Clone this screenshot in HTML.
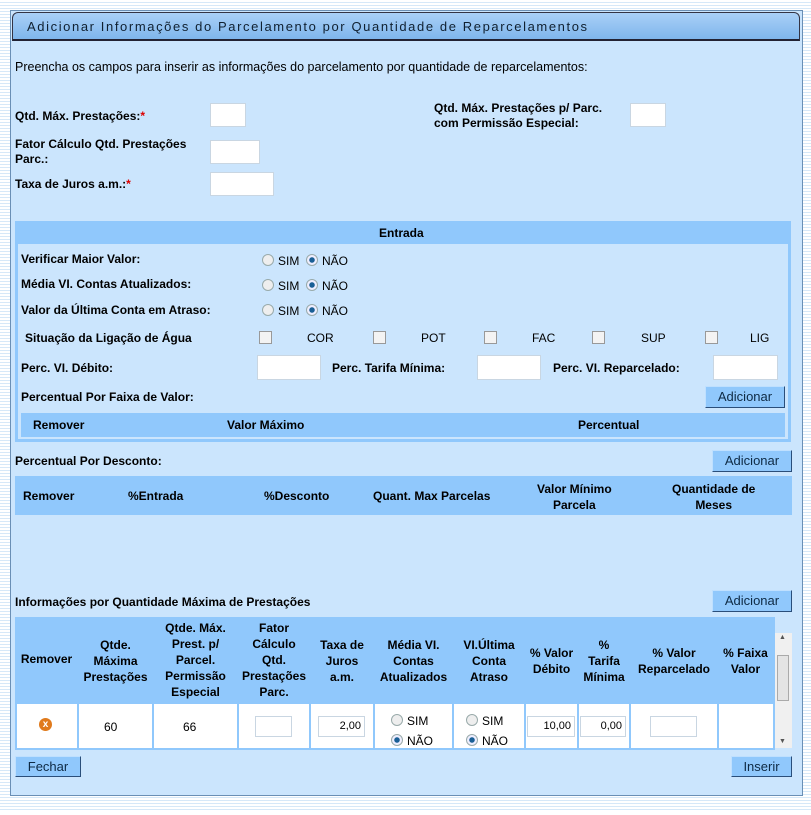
<!DOCTYPE html>
<html><head><meta charset="utf-8"><style>
body{margin:0;width:811px;height:815px;background:#fff;font-family:"Liberation Sans",sans-serif;font-size:12px;color:#000;position:relative;overflow:hidden}
.stripes{position:absolute;left:0;top:0;width:811px;height:812px;background:repeating-linear-gradient(#fff 0 2px,#d6e8f8 2px 3px)}
.panel{position:absolute;left:10px;top:10px;width:791px;height:784px;background:#cbe5fd;border:1px solid #6a8fb5}
.a{position:absolute;white-space:nowrap}
.b{font-weight:bold}
.in{position:absolute;background:#fff;border:1px solid #c9d6e2;box-sizing:border-box;font-size:11px;text-align:right;padding:3px 3px 0 0}
.btn{position:absolute;background:#90c8fc;border:1px solid #2a4e7a;border-top-color:#bfe0ff;border-left-color:#bfe0ff;box-sizing:border-box;text-align:center;font-size:13px;line-height:20px;color:#0e2a44}
.rad{display:inline-block;width:10px;height:10px;border-radius:50%;border:1px solid #9aa;background:#eee;vertical-align:-1px;margin-right:4px}
.rad.on{background:radial-gradient(#1a5f96 0 2.5px,#eef 3px)}
.cb{position:absolute;width:11px;height:11px;border:1px solid #999;background:#f3f3f3}
</style></head><body>
<div class="stripes"></div>
<div class="panel"></div>
<div style="position:absolute;left:12px;top:12px;width:786px;height:26px;border-radius:6px 6px 0 0;background:linear-gradient(#a9d0f7,#7fb6ec);border:1px solid #334;border-bottom:2px solid #223"></div>
<div class="a" style="left:27px;top:19px;font-size:13px;letter-spacing:1.6px;color:#102030">Adicionar Informações do Parcelamento por Quantidade de Reparcelamentos</div>

<div class="a" style="left:15px;top:60px;font-size:12.5px">Preencha os campos para inserir as informações do parcelamento por quantidade de reparcelamentos:</div>
<div class="a b" style="left:15px;top:109px">Qtd. Máx. Prestações:<span style="color:#d00">*</span></div>
<div class="in" style="left:210px;top:103px;width:36px;height:24px"></div>
<div class="a b" style="left:434px;top:101px;line-height:15px">Qtd. Máx. Prestações p/ Parc.<br>com Permissão Especial:</div>
<div class="in" style="left:630px;top:103px;width:36px;height:24px"></div>
<div class="a b" style="left:15px;top:137px;line-height:15px">Fator Cálculo Qtd. Prestações<br>Parc.:</div>
<div class="in" style="left:210px;top:140px;width:50px;height:24px"></div>
<div class="a b" style="left:15px;top:177px">Taxa de Juros a.m.:<span style="color:#d00">*</span></div>
<div class="in" style="left:210px;top:172px;width:64px;height:24px"></div>

<div style="position:absolute;left:15px;top:221px;width:776px;height:221px;background:#90c8fc"></div>
<div style="position:absolute;left:18px;top:244px;width:770px;height:195px;background:#cbe5fd"></div>
<div class="a b" style="left:379px;top:226px">Entrada</div>
<div class="a b" style="left:21px;top:252px">Verificar Maior Valor:</div>
<div class="a b" style="left:21px;top:277px">Média VI. Contas Atualizados:</div>
<div class="a b" style="left:21px;top:303px">Valor da Última Conta em Atraso:</div>
<div class="a" style="left:262px;top:254px"><span class="rad"></span>SIM &nbsp;<span class="rad on"></span>NÃO</div>
<div class="a" style="left:262px;top:279px"><span class="rad"></span>SIM &nbsp;<span class="rad on"></span>NÃO</div>
<div class="a" style="left:262px;top:304px"><span class="rad"></span>SIM &nbsp;<span class="rad on"></span>NÃO</div>
<div class="a b" style="left:25px;top:331px">Situação da Ligação de Água</div>
<div class="cb" style="left:259px;top:331px"></div><div class="a" style="left:307px;top:331px">COR</div>
<div class="cb" style="left:373px;top:331px"></div><div class="a" style="left:421px;top:331px">POT</div>
<div class="cb" style="left:484px;top:331px"></div><div class="a" style="left:532px;top:331px">FAC</div>
<div class="cb" style="left:592px;top:331px"></div><div class="a" style="left:641px;top:331px">SUP</div>
<div class="cb" style="left:705px;top:331px"></div><div class="a" style="left:750px;top:331px">LIG</div>
<div class="a b" style="left:21px;top:361px">Perc. VI. Débito:</div>
<div class="in" style="left:257px;top:355px;width:64px;height:25px"></div>
<div class="a b" style="left:332px;top:361px">Perc. Tarifa Mínima:</div>
<div class="in" style="left:477px;top:355px;width:64px;height:25px"></div>
<div class="a b" style="left:553px;top:361px">Perc. VI. Reparcelado:</div>
<div class="in" style="left:713px;top:355px;width:65px;height:25px"></div>
<div class="a b" style="left:21px;top:390px">Percentual Por Faixa de Valor:</div>
<div class="btn" style="left:705px;top:386px;width:80px;height:22px">Adicionar</div>
<div style="position:absolute;left:21px;top:413px;width:764px;height:24px;background:#90c8fc"></div>
<div class="a b" style="left:33px;top:418px">Remover</div>
<div class="a b" style="left:227px;top:418px">Valor Máximo</div>
<div class="a b" style="left:578px;top:418px">Percentual</div>

<div class="a b" style="left:15px;top:454px">Percentual Por Desconto:</div>
<div class="btn" style="left:712px;top:450px;width:80px;height:22px">Adicionar</div>
<div style="position:absolute;left:15px;top:476px;width:777px;height:39px;background:#90c8fc"></div>
<div class="a b" style="left:23px;top:489px">Remover</div>
<div class="a b" style="left:128px;top:489px">%Entrada</div>
<div class="a b" style="left:264px;top:489px">%Desconto</div>
<div class="a b" style="left:373px;top:489px">Quant. Max Parcelas</div>
<div class="a b" style="left:537px;top:481px;text-align:center;line-height:16px">Valor Mínimo<br>Parcela</div>
<div class="a b" style="left:672px;top:481px;text-align:center;line-height:16px">Quantidade de<br>Meses</div>

<div class="a b" style="left:15px;top:595px">Informações por Quantidade Máxima de Prestações</div>
<div class="btn" style="left:712px;top:590px;width:80px;height:22px">Adicionar</div>
<div style="position:absolute;left:15px;top:617px;width:760px;height:133px;background:#90c8fc"></div>
<div class="a b" style="left:15px;top:652px;width:63px;text-align:center">Remover</div>
<div class="a b" style="left:78px;top:637px;width:75px;text-align:center;line-height:16px">Qtde.<br>Máxima<br>Prestações</div>
<div class="a b" style="left:153px;top:620px;width:85px;text-align:center;line-height:16px">Qtde. Máx.<br>Prest. p/<br>Parcel.<br>Permissão<br>Especial</div>
<div class="a b" style="left:238px;top:620px;width:72px;text-align:center;line-height:16px">Fator<br>Cálculo<br>Qtd.<br>Prestações<br>Parc.</div>
<div class="a b" style="left:310px;top:637px;width:64px;text-align:center;line-height:16px">Taxa de<br>Juros<br>a.m.</div>
<div class="a b" style="left:374px;top:637px;width:79px;text-align:center;line-height:16px">Média VI.<br>Contas<br>Atualizados</div>
<div class="a b" style="left:453px;top:637px;width:72px;text-align:center;line-height:16px">VI.Última<br>Conta<br>Atraso</div>
<div class="a b" style="left:525px;top:645px;width:53px;text-align:center;line-height:16px">% Valor<br>Débito</div>
<div class="a b" style="left:578px;top:637px;width:52px;text-align:center;line-height:16px">%<br>Tarifa<br>Mínima</div>
<div class="a b" style="left:630px;top:645px;width:88px;text-align:center;line-height:16px">% Valor<br>Reparcelado</div>
<div class="a b" style="left:718px;top:645px;width:55px;text-align:center;line-height:16px">% Faixa<br>Valor</div>
<div style="position:absolute;left:17px;top:704px;width:756px;height:44px;background:#fff"></div>
<div style="position:absolute;left:77px;top:704px;width:2px;height:46px;background:#90c8fc;box-shadow:75px 0 #90c8fc,160px 0 #90c8fc,232px 0 #90c8fc,296px 0 #90c8fc,375px 0 #90c8fc,447px 0 #90c8fc,500px 0 #90c8fc,552px 0 #90c8fc,640px 0 #90c8fc"></div>
<div style="position:absolute;left:39px;top:718px;width:13px;height:13px;border-radius:50%;background:#e07a1c;color:#fff;font-size:10px;font-weight:bold;text-align:center;line-height:13px">x</div>
<div class="a" style="left:104px;top:720px">60</div>
<div class="a" style="left:183px;top:720px">66</div>
<div class="in" style="left:255px;top:716px;width:37px;height:21px"></div>
<div class="in" style="left:318px;top:716px;width:47px;height:21px">2,00</div>
<div class="a" style="left:391px;top:711px;line-height:20px"><span class="rad"></span>SIM<br><span class="rad on"></span>NÃO</div>
<div class="a" style="left:466px;top:711px;line-height:20px"><span class="rad"></span>SIM<br><span class="rad on"></span>NÃO</div>
<div class="in" style="left:527px;top:716px;width:48px;height:21px">10,00</div>
<div class="in" style="left:580px;top:716px;width:46px;height:21px">0,00</div>
<div class="in" style="left:650px;top:716px;width:47px;height:21px"></div>
<div style="position:absolute;left:775px;top:633px;width:17px;height:115px;background:#f0f0f0"></div>
<div style="position:absolute;left:777px;top:655px;width:12px;height:46px;background:#e4e4e4;border:1px solid #aaa;box-sizing:border-box"></div>
<div class="a" style="left:779px;top:634px;font-size:7px;color:#555">▲</div>
<div class="a" style="left:779px;top:738px;font-size:7px;color:#555">▼</div>
<div class="btn" style="left:15px;top:756px;width:66px;height:21px">Fechar</div>
<div class="btn" style="left:731px;top:756px;width:61px;height:21px">Inserir</div>
</body></html>
